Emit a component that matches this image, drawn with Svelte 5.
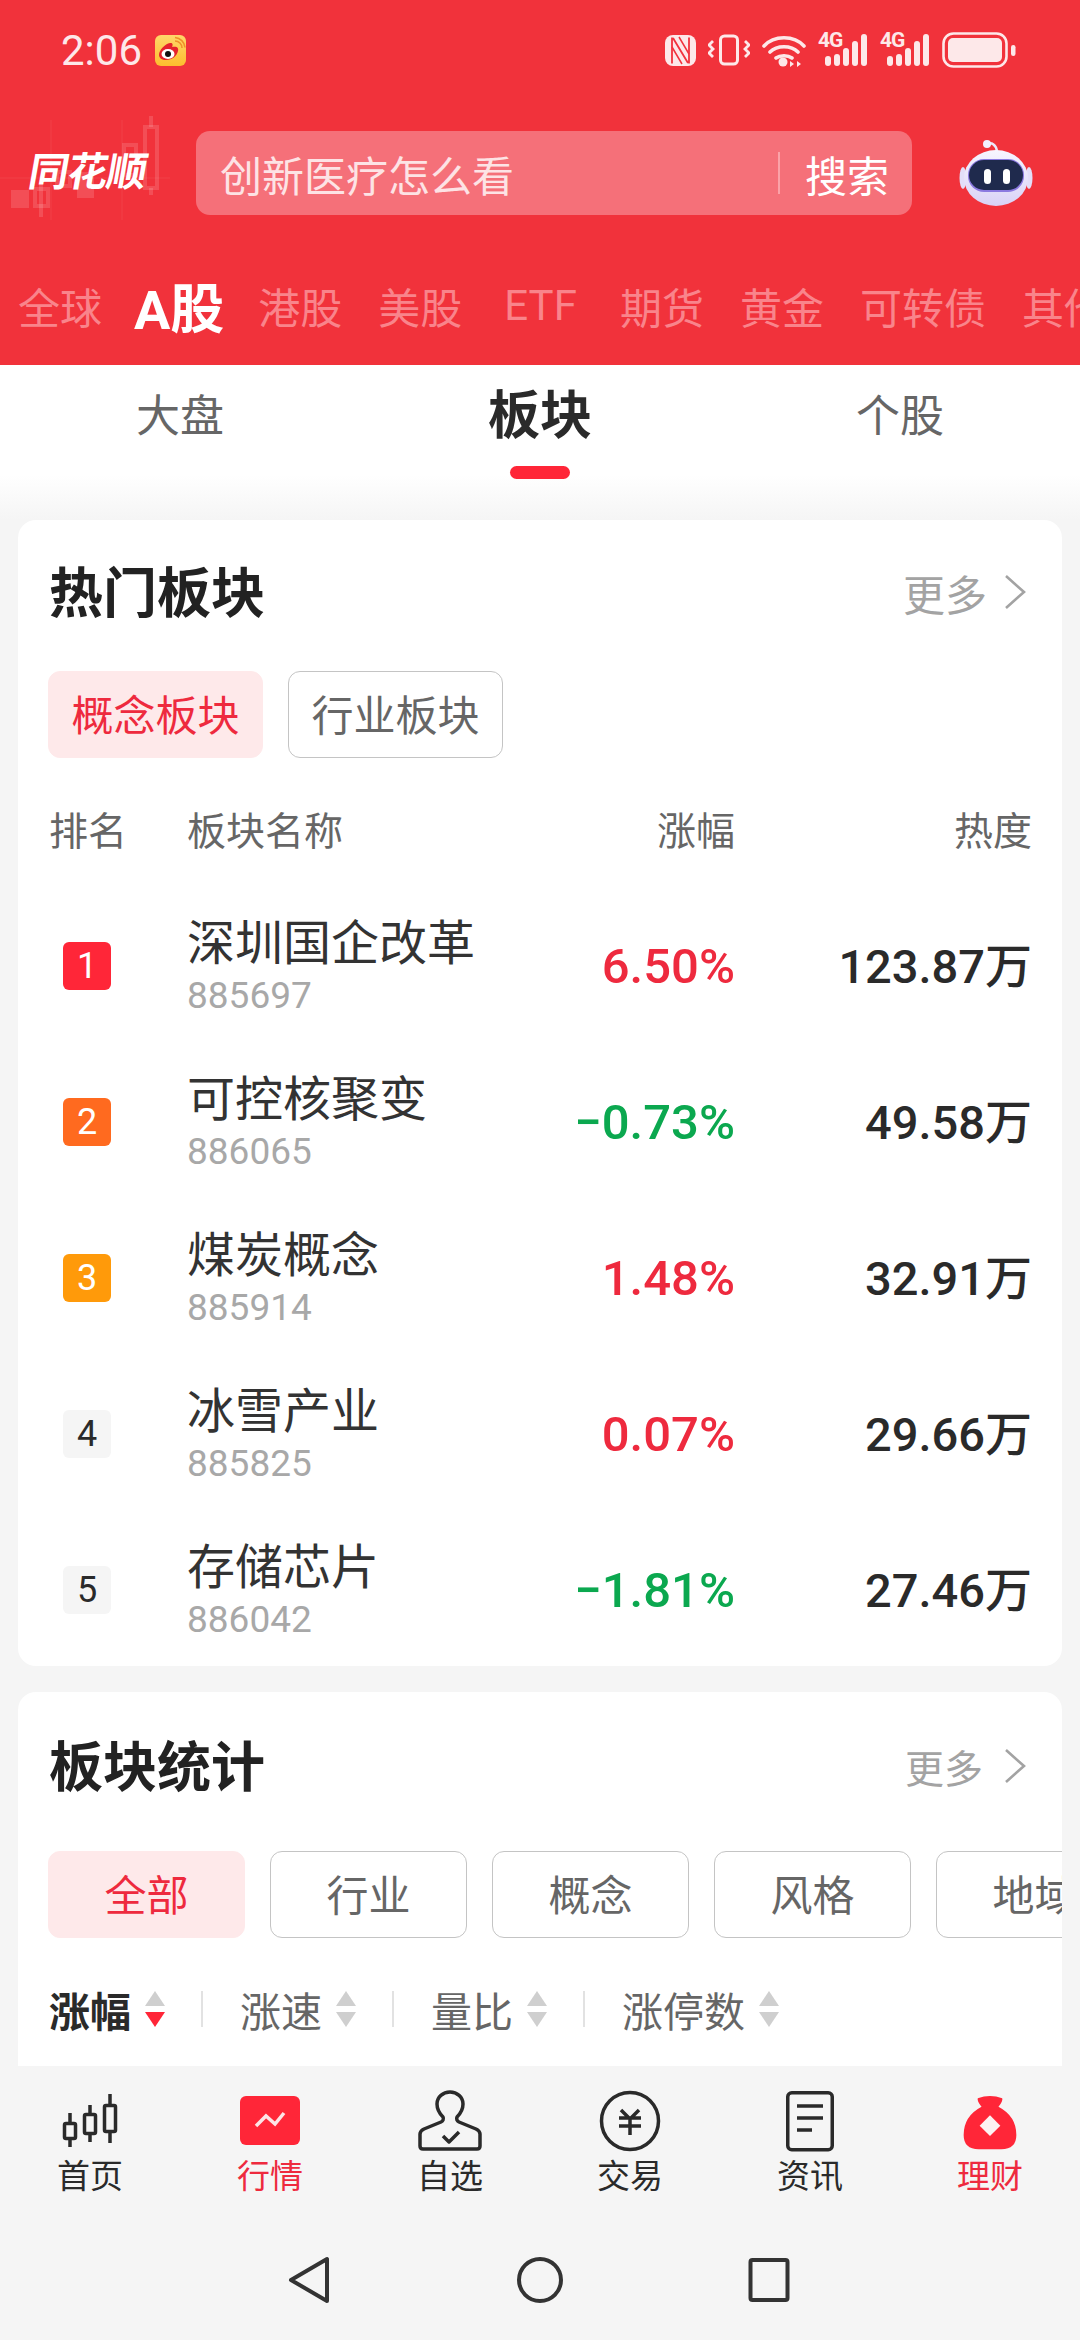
<script lang="ts">
  const markets = ['全球', 'A股', '港股', '美股', 'ETF', '期货', '黄金', '可转债', '其他'];
  const subTabs = ['大盘', '板块', '个股'];

  const hotRows = [
    { rank: 1, name: '深圳国企改革', code: '885697', pct: '6.50%', heat: '123.87', up: true },
    { rank: 2, name: '可控核聚变', code: '886065', pct: '−0.73%', heat: '49.58', up: false },
    { rank: 3, name: '煤炭概念', code: '885914', pct: '1.48%', heat: '32.91', up: true },
    { rank: 4, name: '冰雪产业', code: '885825', pct: '0.07%', heat: '29.66', up: true },
    { rank: 5, name: '存储芯片', code: '886042', pct: '−1.81%', heat: '27.46', up: false }
  ];

  const statChips = ['全部', '行业', '概念', '风格', '地域'];
  const sorts = ['涨幅', '涨速', '量比', '涨停数'];
</script>

<div class="page">
  <header class="top">
    <div class="status">
      <div class="status-left">
        <span class="time">2:06</span>
        <svg width="31" height="31" viewBox="0 0 31 31">
          <defs>
            <linearGradient id="wb" x1="0" y1="0" x2="0" y2="1">
              <stop offset="0" stop-color="#ffd76a" />
              <stop offset="1" stop-color="#fdbd2e" />
            </linearGradient>
          </defs>
          <rect width="31" height="31" rx="6" fill="url(#wb)" />
          <path d="M4 20c0-5 6-11 11-12 3-.6 3 2 2 4 4-1 7 0 6 4-1 5-6 9-12 9-4 0-7-2-7-5z" fill="#e6222c" />
          <ellipse cx="13" cy="19" rx="6.500" ry="5" fill="#fff" />
          <circle cx="13" cy="19" r="3" fill="#111" />
          <path d="M20 6a7 7 0 0 1 7 7M20 2.500a11 11 0 0 1 10 10" fill="none" stroke="#f0902a" stroke-width="1.600" />
        </svg>
      </div>
      <div class="status-right">
        <svg width="31" height="32" viewBox="0 0 31 32">
          <rect y="1" width="31" height="31" rx="8" fill="#fde8e9" />
          <path d="M7 3.500v26M24 3.500v26M8 4l15 25" fill="none" stroke="#f2323d" stroke-width="1.800" />
          <path d="M14 3l10 17M7 13l10 17" fill="none" stroke="#f2323d" stroke-width="1.500" />
        </svg>
        <svg width="42" height="32" viewBox="0 0 42 32" fill="none" stroke="#fde8e9">
          <rect x="12.500" y="2" width="17" height="28" rx="4" stroke-width="3" />
          <path d="M5 7L1 11l4 4-4 4 4 4M37 7l4 4-4 4 4 4-4 4" stroke-width="2.800" />
        </svg>
        <svg width="44" height="34" viewBox="0 0 44 34" fill="none" stroke="#fde8e9" stroke-width="3.600" stroke-linecap="round">
          <path d="M2 13C12 2 32 2 42 13M8 19c7-7 21-7 28 0M14 25c4-3 12-3 16 0" />
          <circle cx="21" cy="29" r="4.500" fill="#fde8e9" stroke="none" />
          <path d="M32 31l-4-3v6zM35 28l4 3-4 3z" fill="#fde8e9" stroke="none" />
        </svg>
        {#each [0, 1] as sim (sim)}
          <div class="signal">
            <span class="net">4G</span>
            <svg width="50" height="34" viewBox="0 0 50 34" fill="#fde8e9">
              <rect x="7" y="23" width="6" height="10" rx="3" />
              <rect x="16" y="21" width="6" height="12" rx="3" />
              <rect x="25" y="15" width="6" height="18" rx="3" />
              <rect x="34" y="8" width="6" height="25" rx="3" />
              <rect x="43" y="1" width="6" height="32" rx="3" />
            </svg>
          </div>
        {/each}
        <svg width="74" height="36" viewBox="0 0 74 36">
          <rect x="1.500" y="1.500" width="63" height="33" rx="10" fill="none" stroke="#fde8e9" stroke-width="2.600" />
          <rect x="6" y="6" width="54" height="24" rx="5" fill="#fde8e9" />
          <rect x="69" y="13" width="4.500" height="11" rx="2.200" fill="#fde8e9" />
        </svg>
      </div>
    </div>

    <div class="search-row">
      <div class="logo">
        <svg class="candles" width="180" height="130" viewBox="0 0 180 130" fill="#fff" stroke="#fff">
          <path d="M51 20v100M122 20v100M0 78h170" stroke-opacity=".05" stroke-width="1.500" />
          <g fill-opacity=".14" stroke="none">
            <rect x="11" y="90" width="18" height="18" />
            <rect x="77" y="72" width="17" height="26" />
          </g>
          <g fill="none" stroke-opacity=".14" stroke-width="4">
            <rect x="35" y="89" width="13" height="17" />
            <path d="M41 85v32" />
            <rect x="57" y="72" width="13" height="14" />
            <rect x="145" y="27" width="12" height="61" />
            <path d="M151 16v11M151 88v7" />
            <rect x="124" y="45" width="12" height="30" />
          </g>
        </svg>
        <span class="logo-text">同花顺</span>
      </div>
      <div class="search">
        <span class="hint">创新医疗怎么看</span>
        <span class="divider"></span>
        <span class="go">搜索</span>
      </div>
      <svg class="robot" width="76" height="70" viewBox="0 0 76 70">
        <defs>
          <linearGradient id="shell" x1="0" y1="0" x2="0" y2="1">
            <stop offset="0" stop-color="#f7f5ff" />
            <stop offset="1" stop-color="#d9d2f6" />
          </linearGradient>
        </defs>
        <path d="M29 6c5-2 9 1 10 7" fill="none" stroke="#ece8fb" stroke-width="2.500" />
        <circle cx="29" cy="6" r="4" fill="#f3f0ff" />
        <ellipse cx="5" cy="40" rx="3.500" ry="11" fill="#e3def8" />
        <ellipse cx="71" cy="40" rx="3.500" ry="11" fill="#e3def8" />
        <ellipse cx="38" cy="40" rx="32" ry="28" fill="url(#shell)" />
        <rect x="10" y="21" width="56" height="33" rx="16" fill="#8b79e0" />
        <rect x="11" y="22" width="54" height="30" rx="15" fill="#1f2a4d" />
        <rect x="26" y="31" width="7" height="15" rx="3.500" fill="#fff" />
        <rect x="45" y="31" width="7" height="15" rx="3.500" fill="#fff" />
      </svg>
    </div>

    <nav class="markets">
      {#each markets as m (m)}
        <span class:current={m === 'A股'} class:latin={m === 'ETF'}>{m}</span>
      {/each}
    </nav>
  </header>

  <main class="content">
    <div class="sub-tabs">
      {#each subTabs as t (t)}
        <div class="sub-tab" class:current={t === '板块'}>
          <span>{t}</span>
          {#if t === '板块'}<i class="bar"></i>{/if}
        </div>
      {/each}
    </div>

    <section class="card hot">
      <div class="card-head">
        <h2>热门板块</h2>
        <div class="more">
          <span>更多</span>
          <svg width="24" height="36" viewBox="0 0 24 36" fill="none" stroke="#a3a3a3" stroke-width="2.600">
            <path d="M3 2l18 16L3 34" />
          </svg>
        </div>
      </div>

      <div class="chips wide">
        <span class="chip on">概念板块</span>
        <span class="chip">行业板块</span>
      </div>

      <div class="table-head">
        <span>排名</span>
        <span>板块名称</span>
        <span class="end">涨幅</span>
        <span class="end">热度</span>
      </div>

      {#each hotRows as row (row.code)}
        <div class="row">
          <span class="rank rank-{row.rank}">{row.rank}</span>
          <div class="name">
            <span class="title">{row.name}</span>
            <span class="code">{row.code}</span>
          </div>
          <span class="pct" class:down={!row.up}>{row.pct}</span>
          <span class="heat">{row.heat}万</span>
        </div>
      {/each}
    </section>

    <section class="card stats">
      <div class="card-head">
        <h2>板块统计</h2>
        <div class="more">
          <span>更多</span>
          <svg width="24" height="36" viewBox="0 0 24 36" fill="none" stroke="#a3a3a3" stroke-width="2.600">
            <path d="M3 2l18 16L3 34" />
          </svg>
        </div>
      </div>

      <div class="chips">
        {#each statChips as c, i (c)}
          <span class="chip" class:on={i === 0}>{c}</span>
        {/each}
      </div>

      <div class="sorts">
        {#each sorts as s, i (s)}
          {#if i > 0}<i class="sep"></i>{/if}
          <div class="sort" class:current={i === 0}>
            <span>{s}</span>
            <svg width="20" height="36" viewBox="0 0 20 36">
              <path d="M10 0l10 15H0z" fill="#cfcfcf" />
              <path d="M10 36L0 21h20z" fill={i === 0 ? '#ff2638' : '#cfcfcf'} />
            </svg>
          </div>
        {/each}
      </div>
    </section>
  </main>

  <footer class="bottom">
    <div class="nav">
      <div class="nav-item">
        <svg width="64" height="64" viewBox="0 0 64 64" fill="none" stroke="#2a2a2a" stroke-width="3.500">
          <path d="M12 25v9M12 50v9M32 17v8M32 46v8M52 6v10M52 44v11" />
          <rect x="6.500" y="35.500" width="11" height="15" rx="1.500" />
          <rect x="26.500" y="26.500" width="11" height="19" rx="1.500" />
          <rect x="46.500" y="17.500" width="11" height="26" rx="1.500" />
        </svg>
        <span>首页</span>
      </div>
      <div class="nav-item on">
        <svg width="64" height="64" viewBox="0 0 64 64">
          <rect x="2" y="8" width="60" height="49" rx="6" fill="#ff2638" />
          <path d="M18 38l10-10 9 8 9-11" fill="none" stroke="#fde4e6" stroke-width="3.500" />
        </svg>
        <span>行情</span>
      </div>
      <div class="nav-item">
        <svg width="64" height="64" viewBox="0 0 64 64" fill="none" stroke="#2a2a2a" stroke-width="3.500" stroke-linejoin="round">
          <path d="M25 29c-4-4-6-9-6-13C19 9 25 4 32 4s13 5 13 12c0 4-2 9-6 13-1 2 0 4 2 5l17 7q4 2 4 5v12q0 3-3 3H5q-3 0-3-3V46q0-3 4-5l17-7c2-1 3-3 2-5z" />
          <path d="M25 48l6 6 10-10" />
        </svg>
        <span>自选</span>
      </div>
      <div class="nav-item">
        <svg width="64" height="64" viewBox="0 0 64 64" fill="none" stroke="#2a2a2a" stroke-width="3.500">
          <circle cx="32" cy="33" r="28.500" />
          <path d="M23 22l9 9 9-9M21 30h22M21 38h22M32 31v16" />
        </svg>
        <span>交易</span>
      </div>
      <div class="nav-item">
        <svg width="64" height="64" viewBox="0 0 64 64" fill="none" stroke="#2a2a2a" stroke-width="3.500">
          <rect x="9.750" y="4.750" width="44.500" height="57" rx="4" />
          <path d="M19 18h26M19 30h26M19 42h15" />
        </svg>
        <span>资讯</span>
      </div>
      <div class="nav-item on">
        <svg width="64" height="68" viewBox="0 0 64 68">
          <path d="M19 11q13-5 26 0 1 3-4 9 19 10 19 30 0 15-16 15H20Q4 65 4 50q0-20 19-30-5-6-4-9z" fill="#ff2638" />
          <path d="M32 29l11 11-11 11-11-11z" fill="#fdf2f2" />
        </svg>
        <span>理财</span>
      </div>
    </div>
    <div class="system">
      <svg width="48" height="48" viewBox="0 0 48 48" fill="none" stroke="#333" stroke-width="4" stroke-linejoin="round">
        <path d="M5 24L41 3v42z" />
      </svg>
      <svg width="48" height="48" viewBox="0 0 48 48" fill="none" stroke="#333" stroke-width="4">
        <circle cx="24" cy="24" r="21" />
      </svg>
      <svg width="48" height="48" viewBox="0 0 48 48" fill="none" stroke="#333" stroke-width="4">
        <rect x="4.500" y="4" width="37" height="40" rx="2" />
      </svg>
    </div>
  </footer>
</div>

<style>
  :global(body) {
    margin: 0;
    background: #f5f5f5;
  }

  .page {
    width: 1080px;
    height: 2340px;
    display: flex;
    flex-direction: column;
    overflow: hidden;
    background: #f5f5f5;
    color: #2a2a2a;
    font-family: Roboto, "Noto Sans CJK SC", sans-serif;
  }

  .top {
    height: 365px;
    flex: none;
    background: #f1323b;
    overflow: hidden;
  }

  .status {
    height: 40px;
    padding: 30px 64px 0 61px;
    display: flex;
    justify-content: space-between;
    align-items: center;
  }

  .status-left {
    display: flex;
    align-items: center;
    gap: 13px;
  }

  .time {
    font-size: 42px;
    color: #fde8e9;
  }

  .status-right {
    display: flex;
    align-items: center;
    gap: 12px;
  }

  .signal {
    position: relative;
    width: 50px;
    height: 34px;
    display: flex;
  }

  .net {
    position: absolute;
    left: 0;
    top: -3px;
    font-size: 21px;
    line-height: 20px;
    font-weight: 700;
    color: #fde8e9;
    letter-spacing: -1px;
  }

  .search-row {
    display: flex;
    align-items: center;
    margin-top: 61px;
    height: 84px;
  }

  .logo {
    position: relative;
    width: 196px;
    height: 84px;
    flex: none;
  }

  .candles {
    position: absolute;
    left: 0;
    top: -31px;
  }

  .logo-text {
    position: absolute;
    left: 29px;
    top: 15px;
    font-size: 40px;
    line-height: 54px;
    font-weight: 700;
    color: #fff;
    letter-spacing: -1px;
    transform: skewX(-10deg);
  }

  .search {
    width: 716px;
    height: 84px;
    box-sizing: border-box;
    padding: 0 23px 0 24px;
    display: flex;
    align-items: center;
    background: #f57079;
    border-radius: 14px;
  }

  .hint {
    flex: 1;
    font-size: 42px;
    color: #fde3e5;
  }

  .divider {
    width: 2px;
    height: 42px;
    background: #fba2a8;
    margin-right: 25px;
  }

  .go {
    font-size: 42px;
    color: #fff;
  }

  .robot {
    margin-left: 46px;
    flex: none;
  }

  .markets {
    display: flex;
    align-items: center;
    gap: 36px;
    height: 60px;
    margin-top: 60px;
    padding-left: 18px;
    white-space: nowrap;
    font-size: 42px;
    color: #f9848b;
  }

  .markets span {
    flex: none;
  }

  .markets .current {
    font-size: 54px;
    font-weight: 700;
    color: #fff;
    margin-left: -4px;
    margin-right: -2px;
  }

  .markets .latin {
    margin: 0 7px 0 6px;
  }

  .content {
    flex: 1;
    min-height: 0;
    padding: 0 18px;
    overflow: hidden;
    background: linear-gradient(#fff 110px, #f5f5f5 155px);
  }

  .sub-tabs {
    display: grid;
    grid-template-columns: repeat(3, 1fr);
    height: 155px;
    margin: 0 -18px;
  }

  .sub-tab {
    display: flex;
    flex-direction: column;
    align-items: center;
    padding-top: 22px;
    font-size: 44px;
    line-height: 60px;
    color: #666;
  }

  .sub-tab.current {
    font-size: 52px;
    font-weight: 700;
    color: #2a2a2a;
  }

  .bar {
    width: 60px;
    height: 13px;
    margin-top: 19px;
    border-radius: 7px;
    background: #ff2638;
  }

  .card {
    background: #fff;
    border-radius: 18px;
    padding: 45px 30px 0 31px;
    overflow: hidden;
  }

  .hot {
    height: 1146px;
    box-sizing: border-box;
  }

  .stats {
    margin-top: 26px;
    height: 500px;
    padding-top: 47px;
    border-radius: 18px 18px 0 0;
  }

  .card-head {
    display: flex;
    justify-content: space-between;
    align-items: center;
    height: 60px;
  }

  h2 {
    margin: 0;
    font-size: 54px;
    line-height: 60px;
    font-weight: 700;
    color: #222;
  }

  .more {
    display: flex;
    align-items: center;
    gap: 16px;
    padding-right: 5px;
    margin-bottom: 6px;
    font-size: 42px;
    color: #a3a3a3;
  }

  .stats .more {
    gap: 20px;
    font-size: 39px;
  }

  .chips {
    display: flex;
    gap: 25px;
    margin: 46px -30px 0 -1px;
  }

  .stats .chips {
    margin-top: 52px;
  }

  .chip {
    flex: none;
    box-sizing: border-box;
    width: 197px;
    height: 87px;
    padding-bottom: 4px;
    display: flex;
    align-items: center;
    justify-content: center;
    border: 1px solid #c4c4c4;
    border-radius: 12px;
    font-size: 42px;
    color: #666;
  }

  .chips.wide .chip {
    width: 215px;
  }

  .chip.on {
    border-color: #fee9ea;
    background: #fee9ea;
    color: #ee2a3e;
  }

  .table-head,
  .row {
    display: grid;
    grid-template-columns: 138px 1fr 200px 297px;
    align-items: center;
  }

  .table-head {
    margin-top: 42px;
    height: 50px;
    font-size: 39px;
    color: #666;
  }

  .end {
    text-align: right;
  }

  .table-head + .row {
    margin-top: 38px;
  }

  .row {
    height: 156px;
  }

  .rank {
    width: 48px;
    height: 48px;
    margin-left: 14px;
    display: flex;
    align-items: center;
    justify-content: center;
    border-radius: 6px;
    font-size: 36px;
    color: #fff;
  }

  .rank-1 {
    background: #ff2638;
  }

  .rank-2 {
    background: #ff6a1f;
  }

  .rank-3 {
    background: #ff9a0a;
  }

  .rank-4,
  .rank-5 {
    background: #f5f5f5;
    color: #2a2a2a;
  }

  .name {
    display: flex;
    flex-direction: column;
    padding-bottom: 4px;
  }

  .title {
    font-size: 48px;
    line-height: 62px;
    color: #333;
    white-space: nowrap;
  }

  .code {
    font-size: 37px;
    line-height: 41px;
    color: #a8a8a8;
  }

  .pct {
    text-align: right;
    padding-top: 2px;
    font-size: 49px;
    line-height: 56px;
    font-weight: 500;
    color: #ee2a3e;
  }

  .pct.down {
    color: #0ba84f;
  }

  .heat {
    text-align: right;
    padding-top: 2px;
    font-size: 47px;
    line-height: 56px;
    font-weight: 500;
    color: #2a2a2a;
  }

  .sorts {
    display: flex;
    align-items: center;
    height: 40px;
    margin-top: 51px;
  }

  .sort {
    display: flex;
    align-items: center;
    gap: 14px;
    font-size: 41px;
    color: #666;
  }

  .sort.current {
    font-weight: 700;
    color: #2a2a2a;
  }

  .sep {
    width: 2px;
    height: 36px;
    margin: 0 37px 0 36px;
    background: #e2e2e2;
  }

  .bottom {
    height: 274px;
    flex: none;
    background: #f5f5f5;
  }

  .nav {
    display: grid;
    grid-template-columns: repeat(6, 1fr);
    padding-top: 22px;
  }

  .nav-item {
    display: flex;
    flex-direction: column;
    align-items: center;
    height: 109px;
    font-size: 33px;
    line-height: 40px;
    color: #2a2a2a;
  }

  .nav-item svg {
    flex: none;
    height: 64px;
    margin-bottom: 5px;
  }

  .nav-item.on {
    color: #ee2a3e;
  }

  .system {
    display: flex;
    justify-content: center;
    gap: 182px;
    margin-top: 59px;
  }
</style>
